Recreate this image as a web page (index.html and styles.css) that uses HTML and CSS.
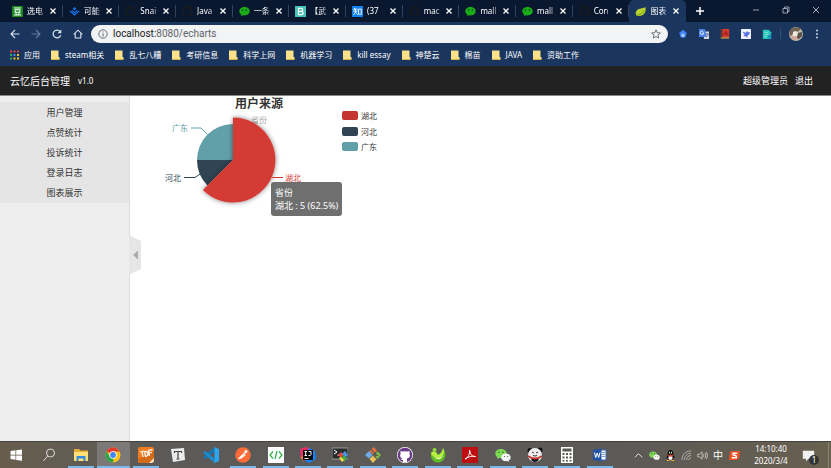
FILE: index.html
```html
<!DOCTYPE html>
<html lang="zh-CN">
<head>
<meta charset="utf-8">
<meta name="viewport" content="width=device-width, initial-scale=1">
<title>图表展示</title>
<link rel="stylesheet" href="styles.css">
</head>
<body>
<svg class="defs" aria-hidden="true">
  <symbol id="github" viewBox="0 0 16 16"><path fill="currentColor" d="M8 .5a7.5 7.5 0 0 0-2.4 14.6c.4.1.5-.2.5-.4v-1.4c-2.100.4-2.600-.9-2.600-.9-.3-.9-.8-1.100-.8-1.100-.7-.5 0-.5 0-.5.800.1 1.200.8 1.200.8.7 1.100 1.700.8 2.200.6 0-.5.2-.8.4-1-1.700-.2-3.400-.8-3.400-3.700 0-.8.3-1.500.8-2-.1-.2-.4-1 .1-2 0 0 .6-.2 2 .8a7 7 0 0 1 4 0c1.400-1 2-.8 2-.8.4 1 .2 1.800.1 2 .5.5.8 1.200.8 2 0 2.900-1.800 3.500-3.500 3.700.3.2.5.7.5 1.400v2.100c0 .2.100.5.5.4A7.500 7.500 0 0 0 8 .5z"/></symbol>
  <symbol id="wechat" viewBox="0 0 16 16"><path fill="#1aad19" d="M8 1.500C3.800 1.500.5 4.200.5 7.600c0 2 1.200 3.800 3 4.900L3 15l2.800-1.500c.7.2 1.400.2 2.200.2 4.200 0 7.500-2.700 7.500-6.100S12.200 1.500 8 1.500z"/><circle cx="5.300" cy="6" r="1.100" fill="#064b10"/><circle cx="10.700" cy="6" r="1.100" fill="#064b10"/></symbol>
  <symbol id="wechat-pair" viewBox="0 0 16 16"><path fill="#7ed957" d="M6 2C2.800 2 .3 4 .3 6.600c0 1.500.8 2.800 2.100 3.600L2 12l2.100-1.100c3.900.8 7.600-1.200 7.600-4.300C11.700 4 9.200 2 6 2z"/><path fill="#f4f4f4" d="M11 6.500c-2.700 0-4.800 1.700-4.800 3.900 0 2.500 2.800 4.300 6 3.700l1.800.9-.4-1.600c1.300-.7 2.100-1.700 2.100-3 0-2.200-2-3.900-4.700-3.900z"/><g fill="#39701f"><circle cx="4" cy="5.300" r=".8"/><circle cx="8" cy="5.300" r=".8"/><circle cx="9.500" cy="9.500" r=".6"/><circle cx="12.600" cy="9.500" r=".6"/></g></symbol>
  <symbol id="cross" viewBox="0 0 8 8"><path d="M1.500 1.500l5 5M6.500 1.500l-5 5" stroke="currentColor" stroke-width="1.300"/></symbol>
  <symbol id="folder" viewBox="0 0 9 10"><path fill="#fbe08a" d="M0 .5h7.500V7H8.500v2.500H0z"/><path fill="#e9bd4b" d="M0 9h8.500v.8H0z"/></symbol>
</svg>

<nav class="tabs" aria-label="标签页">
  <div class="tab-list">
    <div class="tab"><svg viewBox="0 0 16 16"><path fill="#14881f" d="M0 0h16v16H0z"/><path d="M3 3h10M4.500 5.500h7v3.500h-7zM5.500 10l1 2.500M10.500 10l-1 2.500M2.500 13.200h11" stroke="#fff" stroke-width="1.500" fill="none"/></svg><a href="#">选电</a><button aria-label="关闭"><svg><use href="#cross"/></svg></button></div>
    <div class="tab"><svg viewBox="0 0 16 16"><path d="M1 7l7 6 7-6M4 6.500l4 3.500 4-3.500M6.500 4L8 2.600 9.500 4 8 5.500z" fill="none" stroke="#1478f0" stroke-width="1.600"/></svg><a href="#">可能</a><button aria-label="关闭"><svg><use href="#cross"/></svg></button></div>
    <div class="tab"><svg class="dark"><use href="#github"/></svg><a href="#">Snai</a><button aria-label="关闭"><svg><use href="#cross"/></svg></button></div>
    <div class="tab"><svg class="dark"><use href="#github"/></svg><a href="#">Java</a><button aria-label="关闭"><svg><use href="#cross"/></svg></button></div>
    <div class="tab"><svg><use href="#wechat"/></svg><a href="#">一条</a><button aria-label="关闭"><svg><use href="#cross"/></svg></button></div>
    <div class="tab"><svg viewBox="0 0 16 16"><path fill="#48c3b8" d="M0 0h16v16H0z"/><path d="M5 3.500h4a2 2 0 0 1 0 4.300H5zM5 7.800h4.500a2.300 2.300 0 0 1 0 4.700H5z" fill="none" stroke="#fff" stroke-width="1.800"/></svg><a href="#">【武</a><button aria-label="关闭"><svg><use href="#cross"/></svg></button></div>
    <div class="tab"><svg viewBox="0 0 16 16"><path fill="#1280ee" d="M0 0h16v16H0z"/><path d="M4 2.500L2.500 6M3 4.500h5M2 7.500h6M5.200 4.500c0 4-.7 6-3 8.500M5.500 9l2.500 3.500M9.500 4.500h4v7.500h-4z" fill="none" stroke="#fff" stroke-width="1.300"/></svg><a href="#">(37</a><button aria-label="关闭"><svg><use href="#cross"/></svg></button></div>
    <div class="tab"><svg class="dark"><use href="#github"/></svg><a href="#">mac</a><button aria-label="关闭"><svg><use href="#cross"/></svg></button></div>
    <div class="tab"><svg><use href="#wechat"/></svg><a href="#">mall</a><button aria-label="关闭"><svg><use href="#cross"/></svg></button></div>
    <div class="tab"><svg><use href="#wechat"/></svg><a href="#">mall</a><button aria-label="关闭"><svg><use href="#cross"/></svg></button></div>
    <div class="tab"><svg class="dark"><use href="#github"/></svg><a href="#">Con</a><button aria-label="关闭"><svg><use href="#cross"/></svg></button></div>
    <div class="tab active"><svg viewBox="0 0 16 16"><path fill="#b9d22c" d="M15 1c-2 3-7 1.500-11 4.200C.5 7.700 0 12 2.500 14.200 7 15.500 13 14 15 8.500 15.800 6 15.500 3 15 1z"/><path d="M2 13.500c5-.3 9-2.500 11.500-7" fill="none" stroke="#5d9a17" stroke-width="1.300"/></svg><a href="#">图表</a><button aria-label="关闭"><svg><use href="#cross"/></svg></button></div>
  </div>
  <button class="new-tab" aria-label="新标签页"><svg viewBox="0 0 10 10"><path d="M5 1v8M1 5h8" stroke="#fff" stroke-width="1.500"/></svg></button>
  <div class="window-buttons">
    <button aria-label="最小化"><svg viewBox="0 0 8 8"><path d="M1 4h6" stroke="#b9c0cc" stroke-width=".8"/></svg></button>
    <button aria-label="还原"><svg viewBox="0 0 8 8"><path d="M1 2.500h4.500V7H1zM2.500 2.500V1H7v4.500H5.500" fill="none" stroke="#b9c0cc" stroke-width=".8"/></svg></button>
    <button aria-label="关闭窗口"><svg viewBox="0 0 8 8"><path d="M1 1l6 6M7 1L1 7" stroke="#d5d9e0" stroke-width=".8"/></svg></button>
  </div>
</nav>

<div class="toolbar">
  <button aria-label="后退"><svg viewBox="0 0 10 10"><path d="M9.500 5h-8M5 1L1 5l4 4" fill="none" stroke="#dbe3ef" stroke-width="1.100"/></svg></button>
  <button aria-label="前进"><svg viewBox="0 0 10 10"><path d="M.5 5h8M5 1l4 4-4 4" fill="none" stroke="#66809f" stroke-width="1.100"/></svg></button>
  <button aria-label="刷新"><svg viewBox="0 0 10 10"><path d="M8.700 6.300A3.900 3.900 0 1 1 8 2.400" fill="none" stroke="#dbe3ef" stroke-width="1.200"/><path d="M9.300.5v3.800H5.500z" fill="#dbe3ef"/></svg></button>
  <button aria-label="主页"><svg viewBox="0 0 10 10"><path d="M.7 5.300L5 1.200l4.300 4.100M2.200 4.500V9h5.600V4.500" fill="none" stroke="#dbe3ef" stroke-width="1.100"/></svg></button>
  <div class="address">
    <svg viewBox="0 0 10 10"><circle cx="5" cy="5" r="4.200" fill="none" stroke="#5f6368" stroke-width=".9"/><path d="M5 4.500v3M5 2.500v1" stroke="#5f6368"/></svg>
    <a class="url" href="#">localhost:<span>8080/echarts</span></a>
    <button aria-label="收藏"><svg viewBox="0 0 10 10"><path d="M5 .8l1.200 2.900 3.100.3-2.300 2 .7 3.100L5 7.500 2.300 9.100 3 6 .7 4l3.100-.3z" fill="none" stroke="#4c5055" stroke-width=".8"/></svg></button>
  </div>
  <div class="extensions">
    <button aria-label="学术"><svg viewBox="0 0 12 12"><path fill="#4285f4" d="M6 1l5 4-1.500 1.500v2.300C8.500 11.500 3.500 11.500 2.500 8.800V6.500L1 5z"/><circle cx="6" cy="7.500" r="2" fill="#a6c8ff"/></svg></button>
    <button aria-label="翻译"><svg viewBox="0 0 12 12"><path fill="#d7dce2" d="M5 3h7v9H6z"/><path fill="#4a83e9" d="M0 0h7l2.500 9.500H0z"/><path d="M5.500 4.700A2 2 0 1 1 4.700 3M4 4.900h2" fill="none" stroke="#fff"/><path d="M8 6h3.500M9.800 5v1M11 6c0 2-1 3-2 3.700" fill="none" stroke="#667"/></svg></button>
    <button aria-label="词典"><svg viewBox="0 0 12 12"><path fill="#d8392d" d="M1 0h10v11H1z"/><path fill="#5d372d" d="M1 0h2v11H1z"/><path fill="#b9a34c" d="M1 10h10v1.500H1z"/><path d="M4.500 8L7 2.500 9.500 8M5.500 6h3" fill="none" stroke="#8c1912"/></svg></button>
    <button aria-label="飞鸟"><svg viewBox="0 0 12 12"><rect width="12" height="12" rx="1" fill="#f1f4ff"/><path fill="#5871e8" d="M1.500 3l4 1.500 2-2 .5 1.500 3-.5L9.500 6l.5 1-2 .5-.5 3L6 9 2.500 8.500l2-1.500z"/></svg></button>
    <button aria-label="笔记"><svg viewBox="0 0 12 12"><path fill="#27c5b8" d="M1 1h7l3 3v8H1z"/><path d="M3 4h4M3 6.500h5M3 9h3" stroke="#b9f5ea" stroke-width=".8"/><path fill="#168fc0" d="M7 8l4-2v5H7z"/></svg></button>
  </div>
  <button class="avatar" aria-label="用户"><svg viewBox="0 0 14 14"><circle cx="7" cy="7" r="7" fill="#bdb5a8"/><path fill="#716354" d="M1 3.500C4-.5 10-.5 12 2L8 5 5 4 3 8 .5 9z"/><path fill="#eee7dd" d="M4 5l3-1 2 2-1 3-4 1z"/><path fill="#5b5149" d="M9 6l4-1v4l-3 3-2-1z"/><path fill="#d6a391" d="M4 9l4 1-1 3-4-1z"/></svg></button>
  <button aria-label="菜单"><svg viewBox="0 0 10 10" fill="#dbe3ef"><circle cx="5" cy="1.500" r=".9"/><circle cx="5" cy="5" r=".9"/><circle cx="5" cy="8.500" r=".9"/></svg></button>
</div>

<nav class="bookmarks" aria-label="书签">
  <a href="#"><svg viewBox="0 0 9 9"><path fill="#ea4335" d="M0 0h2v2H0zM3.500 0h2v2h-2zM7 0h2v2H7z"/><path fill="#34a853" d="M0 3.500h2v2H0zM0 7h2v2H0z"/><path fill="#4285f4" d="M3.500 3.500h2v2h-2z"/><path fill="#fbbc05" d="M7 3.500h2v2H7zM3.500 7h2v2h-2zM7 7h2v2H7z"/></svg>应用</a>
  <a href="#"><svg><use href="#folder"/></svg>steam相关</a>
  <a href="#"><svg><use href="#folder"/></svg>乱七八糟</a>
  <a href="#"><svg><use href="#folder"/></svg>考研信息</a>
  <a href="#"><svg><use href="#folder"/></svg>科学上网</a>
  <a href="#"><svg><use href="#folder"/></svg>机器学习</a>
  <a href="#"><svg><use href="#folder"/></svg>kill essay</a>
  <a href="#"><svg><use href="#folder"/></svg>神楚云</a>
  <a href="#"><svg><use href="#folder"/></svg>棉苗</a>
  <a href="#"><svg><use href="#folder"/></svg>JAVA</a>
  <a href="#"><svg><use href="#folder"/></svg>资助工作</a>
</nav>

<header class="site-header">
  <h1>云忆后台管理</h1>
  <span class="version">v1.0</span>
  <div class="account"><span>超级管理员</span><a href="#">退出</a></div>
</header>

<div class="content">
  <aside class="sidebar">
    <nav class="menu">
      <a href="#">用户管理</a>
      <a href="#">点赞统计</a>
      <a href="#">投诉统计</a>
      <a href="#">登录日志</a>
      <a href="#">图表展示</a>
    </nav>
    <button class="collapse" aria-label="收起菜单"><svg viewBox="0 0 12 40"><path fill="#e6e6e6" d="M0 0l12 6v28L0 40z"/><path fill="#aaa" d="M9 15.500v9L4 20z"/></svg></button>
  </aside>
  <main>
    <div class="chart">
      <svg width="300" height="130" viewBox="0 0 300 130" role="img" aria-label="用户来源">
        <defs><filter id="shadow" x="-20%" y="-20%" width="140%" height="140%"><feDropShadow dx="0" dy="0" stdDeviation="2.500" flood-opacity=".5"/></filter></defs>
        <text class="chart-title" x="128" y="12" text-anchor="middle">用户来源</text>
        <text class="label muted" x="128" y="27" text-anchor="middle">省份</text>
        <path fill="#61a0a8" d="M102 64H66a36 36 0 0 1 36-36z"/>
        <path fill="#2f4554" d="M102 64L76.500 89.500A36 36 0 0 1 66 64z"/>
        <path fill="#d53a35" filter="url(#shadow)" d="M102 64V21.500A42.500 42.500 0 1 1 71.900 94.100z"/>
        <g fill="none"><path stroke="#61a0a8" d="M76.500 38.500L70 32H60"/><path stroke="#2f4554" d="M69 78l-5 3.500H53"/><path stroke="#d53a35" d="M141 81.500h11"/></g>
        <text class="label teal" x="57" y="35" text-anchor="end">广东</text>
        <text class="label navy" x="50" y="85" text-anchor="end">河北</text>
        <text class="label red" x="154" y="85">湖北</text>
        <rect x="211" y="15" width="16" height="9" rx="2" fill="#c23531"/><text class="label grey" x="230" y="23">湖北</text>
        <rect x="211" y="31" width="16" height="9" rx="2" fill="#2f4554"/><text class="label grey" x="230" y="39">河北</text>
        <rect x="211" y="46" width="16" height="9" rx="2" fill="#61a0a8"/><text class="label grey" x="230" y="54">广东</text>
      </svg>
      <div class="tooltip">省份<br>湖北 : 5 (62.5%)</div>
    </div>
  </main>
</div>

<footer class="taskbar">
  <div class="apps">
    <button aria-label="开始"><svg viewBox="0 0 16 16"><path fill="#fff" d="M2.500 4l5-.7v4.400h-5zM8.200 3.200l5.800-.8v5.300H8.200zM2.500 8.400h5v4.400l-5-.7zM8.200 8.400H14v5.300l-5.800-.8z"/></svg></button>
    <button aria-label="搜索"><svg viewBox="0 0 16 16"><circle cx="9.500" cy="6" r="4" fill="none" stroke="#ddd"/><path d="M6.700 9L2.500 14" stroke="#ddd"/></svg></button>
    <button class="open" aria-label="文件"><svg viewBox="0 0 16 16"><path fill="#e9ad35" d="M1 2h5l1.500 1.500H15V14H1z"/><path fill="#ffdf77" d="M1 5h14v9H1z"/><path fill="#348bdd" d="M3.500 9h9v5h-2v-2.500h-5V14h-2z"/></svg></button>
    <button class="open current" aria-label="Chrome"><svg viewBox="0 0 16 16"><circle cx="8" cy="8" r="7.500" fill="#fbc116"/><path fill="#e33b2e" d="M8 8L1.500 4.250A7.500 7.500 0 0 1 14.500 4.500H8z"/><path fill="#2ba24c" d="M1.500 4.250L5 10l3.500 1L8 15.500A7.500 7.500 0 0 1 1.500 4.250z"/><circle cx="8" cy="8" r="3.700" fill="#fff"/><circle cx="8" cy="8" r="2.900" fill="#4285f4"/></svg></button>
    <button class="open" aria-label="PDF"><svg viewBox="0 0 16 16"><rect width="16" height="16" rx="2" fill="#f07c22"/><path fill="#b9570e" d="M0 12l16-8v10l-2 2H2z" opacity=".5"/><path d="M2 5l4-1M4 5l1 5M6.500 4.500l1 5c4-1 3-5.500-1-5M11.500 9l-1-5.500 4-.8M11 6l3-.5" stroke="#fff" stroke-width="1.200" fill="none"/><path fill="#ffe4c8" d="M11 16l5-5v3l-2 2z"/></svg></button>
    <button aria-label="Typora"><svg viewBox="0 0 16 16"><path fill="#ececec" d="M1 2l13-1 1 12-12 2z"/><path d="M4.500 6V4.500h7V6M8 4.500v7.500M6.500 12h3" fill="none" stroke="#444" stroke-width="1.200"/></svg></button>
    <button aria-label="VS Code"><svg viewBox="0 0 16 16"><path fill="#1477b8" d="M11.500 0v4.500L2.500 12 0 10.500z"/><path fill="#1b8bd0" d="M0 5.500L2.500 4l9 7.500V16z"/><path fill="#2aa5ee" d="M11.500 0L16 2v12l-4.500 2z"/></svg></button>
    <button class="open" aria-label="Postman"><svg viewBox="0 0 16 16"><circle cx="8" cy="8" r="7.700" fill="#ff6c37"/><path d="M3.500 12L10 5.500M5.500 11.500l5-4" stroke="#fff" stroke-width="1.200"/><circle cx="11" cy="4.500" r="1.500" fill="#fff"/></svg></button>
    <button class="open" aria-label="开发者工具"><svg viewBox="0 0 16 16"><path fill="#fff" d="M0 0h16v16H0z"/><path d="M5 4.500L2 8l3 3.500M11 4.500L14 8l-3 3.500M9 4l-2 8" stroke="#2baf45" stroke-width="1.200" fill="none"/></svg></button>
    <button class="open" aria-label="IDEA"><svg viewBox="0 0 16 16"><path fill="#f12d65" d="M0 2l7-2 5 3-8 11-3-3z"/><path fill="#1782ff" d="M9 1l6 3 1 8-7 4-6-4z"/><path fill="#fa8332" d="M0 10l5-1-1 5z"/><path fill="#090909" d="M3 3h10v10H3z"/><path d="M4.500 4.500h2.500M5.700 4.500v4M4.500 8.500H7M8.500 4.500h2.500v3.300q0 1-2.500.7M4.500 11.500h4" stroke="#fff" fill="none"/></svg></button>
    <button class="open" aria-label="终端"><svg viewBox="0 0 16 16"><path fill="#292d2e" stroke="#bbb" stroke-width=".7" d="M0 1h16v11H0z"/><path d="M2 3l3 2-3 2M5.500 8h3" stroke="#fff" fill="none"/><path fill="#e44839" d="M6 8l3-3 3 3-3 3z"/><path fill="#42a943" d="M9 11l3-3 3 3-3 4z"/><path fill="#429bea" d="M10 7l3-3 3 4-2 2z"/><path fill="#ffd748" d="M7 11l2-1 3 3-2 2z"/></svg></button>
    <button class="open" aria-label="Git"><svg viewBox="0 0 16 16"><path fill="#e37343" d="M4.500 4L8.500 0l3.500 3.500L8 7.500z"/><path fill="#6fa9e5" d="M0 8l4-4 3.500 4L4 11.500z"/><path fill="#83b948" d="M9 8l3.500-3.500L16 8l-3.500 4z"/><path fill="#e8c258" d="M4.500 12L8 8.500l3.500 3.500L8 16z"/><path d="M6 2l4 5v4M10 7l3 2" stroke="#524f4d" stroke-width="1.100" fill="none"/><circle cx="10" cy="7" r="1.200" fill="#524f4d"/></svg></button>
    <button class="open" aria-label="GitHub"><svg viewBox="0 0 16 16"><circle cx="8" cy="8" r="8" fill="#fff"/><circle cx="8" cy="8" r="7.300" fill="#6b3a86"/><path fill="#fff" d="M3.500 4l2 .6a8 8 0 0 1 5 0l2-.6v3c1.200 2.400-.3 4-2.500 4.500v3.500H6v-2c-1.500.3-2-.5-2.500-1.200 1 .1 1.300.7 2.500.3C3.500 11 2.500 9.500 3.500 7z"/></svg></button>
    <button class="open" aria-label="Navicat"><svg viewBox="0 0 16 16"><path fill="#62bd21" d="M1 6c3-2 5-1 7 1 3 0 5-3 5-6 4 5 3 13-4 14.500C4 16 0 12 1 6z"/><path fill="#b8ef43" d="M1 6c2-3 6-1 6 1s4 2 6-6c2 5 0 9-4 10-4 0-7-2-8-5z"/><path fill="#edfacb" d="M4 9c2 3 6 3 9-1-1 5-7 6-9 1z"/><circle cx="4.500" cy="3" r="2" fill="#94d936"/></svg></button>
    <button class="open" aria-label="Acrobat"><svg viewBox="0 0 16 16"><path fill="#bd0f12" d="M0 0h16v16H0z"/><path d="M3 12c3-1 5-5 4.500-9 1 5 3 7 6 6.500-3-1-7 0-10.500 2.500z" fill="none" stroke="#fff"/></svg></button>
    <button class="open" aria-label="微信"><svg><use href="#wechat-pair"/></svg></button>
    <button class="open" aria-label="游戏"><svg viewBox="0 0 16 16"><circle cx="3" cy="3.500" r="2.500" fill="#111"/><circle cx="13" cy="3" r="2.500" fill="#111"/><circle cx="8" cy="8" r="7" fill="#eee"/><path d="M5 5l2 1M9 6l2-1M6 8.500q2 1 4 0" fill="none" stroke="#333"/><path fill="#171717" d="M4 12c1 4 7 4 8 0z"/><path d="M1 9q7 5 14 0" fill="none" stroke="#c33830" stroke-width="1.800"/></svg></button>
    <button class="open" aria-label="计算器"><svg viewBox="0 0 16 16"><path fill="#fff" d="M2 0h12v16H2z"/><path fill="#5b5956" d="M3.500 1.500h9v3h-9zM3.500 6h2v2h-2zM7 6h2v2H7zM10.500 6h2v2h-2zM3.500 9.500h2v2h-2zM7 9.500h2v2H7zM10.500 9.500h2v2h-2zM3.500 13h2v1.500h-2zM7 13h2v1.500H7zM10.500 13h2v1.500h-2z"/></svg></button>
    <button class="open" aria-label="Word"><svg viewBox="0 0 16 16"><path fill="#fff" stroke="#3b69b5" d="M8 3h6v10H8z"/><path d="M10 5.500h3M10 7.500h3M10 9.500h3" stroke="#7799cd"/><path fill="#2454a4" d="M1 3l8.500-1.500v13L1 13z"/><path d="M2.500 5.500l1.200 5L5.200 6l1.500 4.500L8 5.500" fill="none" stroke="#fff"/></svg></button>
  </div>
  <div class="tray">
    <button aria-label="展开"><svg viewBox="0 0 12 12"><path d="M2 8l4-4 4 4" fill="none" stroke="#eee"/></svg></button>
    <button aria-label="微信消息"><svg><use href="#wechat-pair"/></svg></button>
    <button aria-label="QQ"><svg viewBox="0 0 12 12"><path fill="#101010" d="M6 0C3 0 3 3 3 5L1 9l1.500-.5L4 11h4l1.500-2.500L11 9 9 5c0-2 0-5-3-5z"/><ellipse cx="6" cy="8.500" rx="2.300" ry="2.500" fill="#fff"/><path d="M3 5.800q3 1.500 6 0" stroke="#e33b2c" stroke-width="1.500" fill="none"/><path fill="#f6ad24" d="M4.500 4h3L6 5zM2 11h3v1H2zM7 11h3v1H7z"/><path fill="#fff" d="M4.500 2h1v1.500h-1zM6.500 2h1v1.500h-1z"/></svg></button>
    <button aria-label="网络"><svg viewBox="0 0 12 12"><g fill="none" stroke="#ccc" stroke-width=".8"><path d="M1 11C1 5 5 1 11 1M3.500 11C3.500 7 7 3.500 11 3.500M6 11c0-3 2-5 5-5M8.500 11c0-1.500 1-2.500 2.500-2.500"/></g></svg></button>
    <button aria-label="音量"><svg viewBox="0 0 12 12"><path d="M.8 4.500h2L5.500 2v8L2.800 7.500h-2zM7 4.500q1 1.500 0 3M8.700 3q2 3 0 6M10.300 2q2.400 4 0 8" fill="none" stroke="#ddd" stroke-width=".8"/></svg></button>
    <button class="ime">中</button>
    <button aria-label="搜狗输入法"><svg viewBox="0 0 12 12"><path fill="#f25022" d="M2 1h10l-1 8-3 2H0l1-8z"/><path d="M9 3.500H4.500q-1 2 1.500 2.300T8 8.500H3" fill="none" stroke="#fff" stroke-width="1.600"/></svg></button>
  </div>
  <div class="clock"><time>14:10:40</time><time>2020/3/4</time></div>
  <button class="notice" aria-label="通知"><svg viewBox="0 0 16 16"><path fill="#f2f2f2" d="M1 2h14v10H8l-3 3v-3H1z"/></svg><span>1</span></button>
</footer>
</body>
</html>
```
FILE: styles.css
```css
* { box-sizing: border-box; }

body {
  margin: 0;
  min-height: 100vh;
  display: flex;
  flex-direction: column;
  background: #fff;
  font-family: "Noto Sans", "Noto Sans CJK SC", sans-serif;
  font-size: 8px;
  line-height: 12px;
  color: #333;
}

a { color: inherit; text-decoration: none; }

button {
  display: flex;
  align-items: center;
  justify-content: center;
  padding: 0;
  border: 0;
  background: none;
  color: inherit;
  font: inherit;
}

svg { display: block; flex: none; }
.defs { position: absolute; width: 0; height: 0; }

/* Browser tabs */
.tabs {
  display: flex;
  height: 22px;
  background: #09182f;
  color: #fff;
}
.tab-list {
  display: flex;
  flex: 0 1 686px;
  min-width: 0;
  padding-left: 6px;
}
.tab {
  display: flex;
  flex: 1;
  align-items: center;
  min-width: 0;
  padding: 0 6px;
  position: relative;
}
.tab::after {
  content: "";
  position: absolute;
  right: 0;
  top: 5px;
  width: 1px;
  height: 12px;
  background: #34435b;
}
.tab > svg { width: 11px; height: 11px; }
.tab > .dark { color: #191a1c; }
.tab a {
  flex: 1;
  min-width: 0;
  margin-left: 4px;
  white-space: nowrap;
  -webkit-mask-image: linear-gradient(to right, #000 60%, rgba(0, 0, 0, .2));
  mask-image: linear-gradient(to right, #000 60%, rgba(0, 0, 0, .2));
}
.tab button { margin-left: 3px; }
.tab button svg { width: 8px; height: 8px; }
.active { background: #1a355e; border-radius: 5px 5px 0 0; }
.active::after { display: none; }
.new-tab { width: 28px; }
.new-tab svg { width: 10px; height: 10px; }
.window-buttons { display: flex; margin-left: auto; padding-bottom: 3px; }
.window-buttons button { width: 30px; }
.window-buttons svg { width: 8px; height: 8px; }

/* Address bar */
.toolbar {
  display: flex;
  align-items: center;
  height: 23px;
  padding: 0 4px;
  background: #1a355e;
}
.toolbar > button { width: 21px; }
.toolbar > button svg { width: 10px; height: 10px; }
.address {
  display: flex;
  flex: 1;
  align-items: center;
  height: 18px;
  margin-left: 3px;
  padding: 0 7px;
  border-radius: 9px;
  background: #f1f3f4;
}
.address svg { width: 10px; height: 10px; }
.url {
  flex: 1;
  margin-left: 5px;
  font-family: Roboto, sans-serif;
  font-size: 10px;
  color: #202124;
}
.url span { color: #5f6368; }
.extensions {
  display: flex;
  margin: 0 4px;
  padding-right: 3px;
  border-right: 1px solid #34517a;
}
.extensions button { width: 21px; }
.extensions svg { width: 10px; height: 10px; }
.toolbar > .avatar svg { width: 14px; height: 14px; }

/* Bookmarks */
.bookmarks {
  display: flex;
  align-items: center;
  gap: 11px;
  height: 21px;
  padding: 0 10px 2px;
  background: #1a355e;
  color: #fff;
  white-space: nowrap;
}
.bookmarks a { display: flex; align-items: center; gap: 5px; }
.bookmarks svg { width: 9px; height: 10px; }

/* Admin header */
.site-header {
  display: flex;
  align-items: center;
  height: 30px;
  padding: 0 18px 0 10px;
  border-bottom: 1px solid #888;
  background: #222;
  color: #fff;
}
.site-header h1 { margin: 0; font-size: 10px; font-weight: 400; }
.version { margin-left: 8px; }
.account { display: flex; gap: 7px; margin-left: auto; font-size: 9px; }

/* Page content */
.content { display: flex; flex: 1; }
.sidebar {
  position: relative;
  width: 130px;
  padding-top: 6px;
  border-right: 1px solid #ddd;
  background: #eee;
}
.menu {
  display: flex;
  flex-direction: column;
  padding-top: 1px;
  background: #e5e5e5;
  font-size: 9px;
  line-height: 20px;
  text-align: center;
}
.collapse {
  position: absolute;
  left: 100%;
  top: 50%;
  margin-top: -34px;
}
.collapse svg { width: 12px; height: 40px; }
main { flex: 1; min-width: 0; padding-left: 1px; }
.chart { position: relative; }
.chart-title { font-size: 12px; font-weight: 700; fill: #333; }
.label { font-size: 8px; }
.muted { fill: #aaa; }
.teal { fill: #61a0a8; }
.navy { fill: #2f4554; }
.red { fill: #d53a35; }
.grey { fill: #333; }
.tooltip {
  position: absolute;
  left: 140px;
  top: 86px;
  padding: 4px;
  border-radius: 3px;
  background: rgba(50, 50, 50, .7);
  color: #fff;
  font-size: 9px;
  line-height: 13px;
  white-space: nowrap;
}

/* Taskbar */
.taskbar {
  display: flex;
  height: 27px;
  border-top: 1px solid #45423e;
  background: linear-gradient(to right, #675d4d, #5b5a58 20%, #5c5a57 75%, #68604f);
  color: #fff;
}
.apps { display: flex; flex: 0 1 616px; min-width: 0; }
.apps button { flex: 1; }
.apps svg { width: 16px; height: 16px; }
.open {
  background: linear-gradient(#76b9ed, #76b9ed) center bottom / 26px 2px no-repeat;
}
.current { background-color: #7a7977; background-size: 100% 2px; }
.tray { display: flex; margin-left: auto; }
.tray button { width: 16px; }
.tray svg { width: 11px; height: 11px; }
.tray .ime { font-size: 10px; }
.clock {
  display: flex;
  flex-direction: column;
  justify-content: center;
  width: 50px;
  margin-left: 4px;
  text-align: center;
}
.notice {
  position: relative;
  justify-content: flex-start;
  width: 33px;
  margin-right: 2px;
  padding-left: 6px;
  border-right: 1px solid #8b8375;
}
.notice svg { width: 13px; height: 13px; }
.notice span {
  position: absolute;
  left: 13px;
  top: 13px;
  width: 10px;
  height: 10px;
  border-radius: 5px;
  background: #333;
  line-height: 10px;
}
```
